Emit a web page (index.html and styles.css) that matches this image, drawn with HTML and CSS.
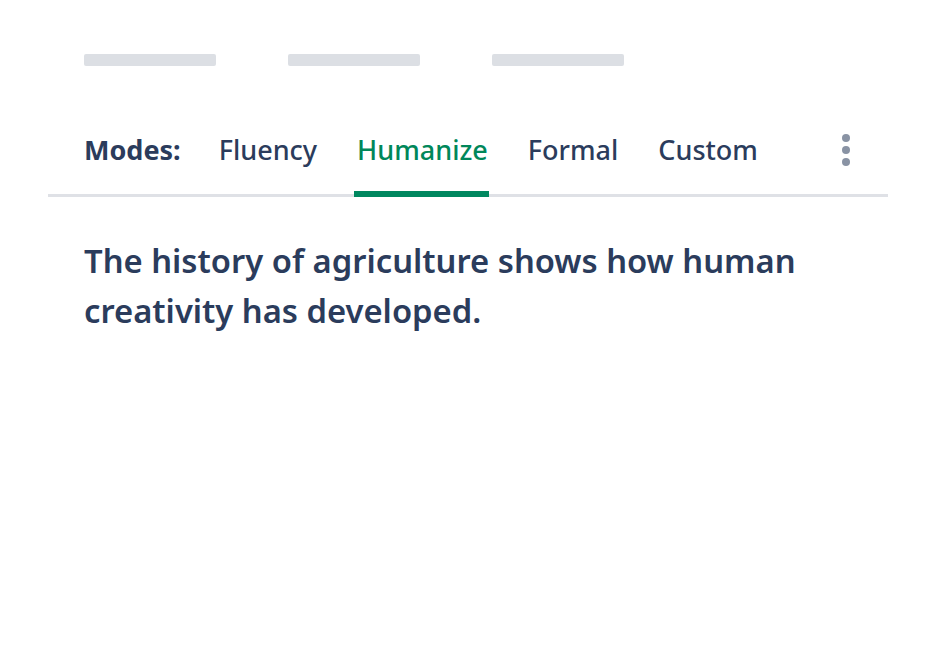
FILE: index.html
```html
<!DOCTYPE html>
<html lang="en">
<head>
<meta charset="utf-8">
<title>Modes</title>
<link rel="stylesheet" href="styles.css">
</head>
<body>
<div class="page">
  <div class="skeleton">
    <span class="bar"></span>
    <span class="bar"></span>
    <span class="bar"></span>
  </div>
  <nav class="tabs">
    <span class="label">Modes:</span>
    <span class="tab">Fluency</span>
    <span class="tab active">Humanize</span>
    <span class="tab">Formal</span>
    <span class="tab">Custom</span>
    <span class="more" aria-label="More"><i></i><i></i><i></i></span>
  </nav>
  <p class="text">The history of agriculture shows how human creativity has developed.</p>
</div>
</body>
</html>
```

FILE: styles.css
```css
html, body {
  margin: 0;
  background: #ffffff;
}
body {
  font-family: "Noto Sans", "Open Sans", sans-serif;
  color: #2b3c5c;
}
.page {
  padding: 54px 48px 0;
}
.skeleton {
  display: flex;
  gap: 72px;
  padding: 0 36px;
}
.bar {
  width: 132px;
  height: 12px;
  border-radius: 2px;
  background: #dcdfe4;
}
.tabs {
  margin-top: 66px;
  display: flex;
  align-items: center;
  gap: 40px;
  padding: 0 36px;
  border-bottom: 3px solid #dfe1e6;
  font-size: 27px;
  line-height: 36px;
}
.label {
  font-weight: 700;
  padding-bottom: 26px;
  margin-right: -2px;
}
.tab {
  position: relative;
  padding-bottom: 26px;
  font-weight: 500;
  color: #2b3c5c;
}
.tab.active {
  color: #00875a;
}
.tab.active::after {
  content: "";
  position: absolute;
  left: -3px;
  right: -1px;
  bottom: -3px;
  height: 6px;
  background: #00875f;
}
.more {
  margin-left: auto;
  width: 12px;
  display: flex;
  flex-direction: column;
  align-items: center;
  gap: 4px;
  padding-bottom: 26px;
}
.more i {
  width: 8px;
  height: 8px;
  border-radius: 50%;
  background: #8993a4;
}
.text {
  margin: 39px 36px 0;
  font-size: 32.75px;
  line-height: 50px;
  font-weight: 600;
  max-width: 740px;
}
```
